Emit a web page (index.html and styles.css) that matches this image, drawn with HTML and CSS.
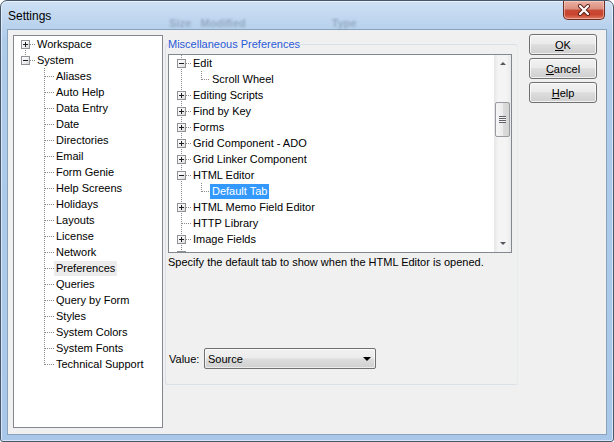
FILE: index.html
```html
<!DOCTYPE html>
<html>
<head>
<meta charset="utf-8">
<title>Settings</title>
<link rel="stylesheet" href="styles.css">
</head>
<body>
<div class="window">
  <div class="titlebar">
    <span class="title">Settings</span>
    <span class="ghost g1">Size&nbsp;&nbsp;&nbsp;Modified</span>
    <span class="ghost g2">Type</span>
    <button class="close" aria-label="Close">
      <svg width="14" height="12" viewBox="0 0 14 12">
        <path d="M3 2 L11 10 M11 2 L3 10" stroke="#5a2018" stroke-width="4" stroke-linecap="round" fill="none"/>
        <path d="M3 2 L11 10 M11 2 L3 10" stroke="#ffffff" stroke-width="2.2" stroke-linecap="round" fill="none"/>
      </svg>
    </button>
  </div>
  <div class="client">
    <div class="pane ltree">
      <div class="row"><span class="gut lroot-a"><span class="exp plus"></span></span><span class="lbl">Workspace</span></div>
      <div class="row"><span class="gut lroot-b"><span class="exp"></span></span><span class="lbl">System</span></div>
      <div class="row"><span class="gut lchild"></span><span class="lbl">Aliases</span></div>
      <div class="row"><span class="gut lchild"></span><span class="lbl">Auto Help</span></div>
      <div class="row"><span class="gut lchild"></span><span class="lbl">Data Entry</span></div>
      <div class="row"><span class="gut lchild"></span><span class="lbl">Date</span></div>
      <div class="row"><span class="gut lchild"></span><span class="lbl">Directories</span></div>
      <div class="row"><span class="gut lchild"></span><span class="lbl">Email</span></div>
      <div class="row"><span class="gut lchild"></span><span class="lbl">Form Genie</span></div>
      <div class="row"><span class="gut lchild"></span><span class="lbl">Help Screens</span></div>
      <div class="row"><span class="gut lchild"></span><span class="lbl">Holidays</span></div>
      <div class="row"><span class="gut lchild"></span><span class="lbl">Layouts</span></div>
      <div class="row"><span class="gut lchild"></span><span class="lbl">License</span></div>
      <div class="row"><span class="gut lchild"></span><span class="lbl">Network</span></div>
      <div class="row"><span class="gut lchild"></span><span class="lbl inactive-sel">Preferences</span></div>
      <div class="row"><span class="gut lchild"></span><span class="lbl">Queries</span></div>
      <div class="row"><span class="gut lchild"></span><span class="lbl">Query by Form</span></div>
      <div class="row"><span class="gut lchild"></span><span class="lbl">Styles</span></div>
      <div class="row"><span class="gut lchild"></span><span class="lbl">System Colors</span></div>
      <div class="row"><span class="gut lchild"></span><span class="lbl">System Fonts</span></div>
      <div class="row"><span class="gut lchild last"></span><span class="lbl">Technical Support</span></div>
    </div>

    <fieldset class="group">
      <legend>Miscellaneous Preferences</legend>
      <div class="list">
        <div class="rtree">
          <div class="row"><span class="gut rroot"><span class="exp"></span></span><span class="lbl">Edit</span></div>
          <div class="row"><span class="gut rchild"></span><span class="lbl">Scroll Wheel</span></div>
          <div class="row"><span class="gut rroot"><span class="exp plus"></span></span><span class="lbl">Editing Scripts</span></div>
          <div class="row"><span class="gut rroot"><span class="exp plus"></span></span><span class="lbl">Find by Key</span></div>
          <div class="row"><span class="gut rroot"><span class="exp plus"></span></span><span class="lbl">Forms</span></div>
          <div class="row"><span class="gut rroot"><span class="exp plus"></span></span><span class="lbl">Grid Component - ADO</span></div>
          <div class="row"><span class="gut rroot"><span class="exp plus"></span></span><span class="lbl">Grid Linker Component</span></div>
          <div class="row"><span class="gut rroot"><span class="exp"></span></span><span class="lbl">HTML Editor</span></div>
          <div class="row"><span class="gut rchild"></span><span class="lbl selected">Default Tab</span></div>
          <div class="row"><span class="gut rroot"><span class="exp plus"></span></span><span class="lbl">HTML Memo Field Editor</span></div>
          <div class="row"><span class="gut rleaf"></span><span class="lbl">HTTP Library</span></div>
          <div class="row"><span class="gut rroot"><span class="exp plus"></span></span><span class="lbl">Image Fields</span></div>
          <div class="row"><span class="gut rroot"><span class="exp plus"></span></span></div>
        </div>
        <div class="vscroll">
          <div class="sb-btn"><span class="tri-up"></span></div>
          <div class="track"><div class="thumb"><span class="grip"></span></div></div>
          <div class="sb-btn"><span class="tri-down"></span></div>
        </div>
      </div>
      <p class="desc">Specify the default tab to show when the HTML Editor is opened.</p>
      <div class="value-row">
        <span class="value-label">Value:</span>
        <div class="combo"><span>Source</span><span class="tri-down dark"></span></div>
      </div>
    </fieldset>

    <div class="buttons">
      <button class="btn"><u>O</u>K</button>
      <button class="btn"><u>C</u>ancel</button>
      <button class="btn"><u>H</u>elp</button>
    </div>
  </div>
</div>
</body>
</html>
```

FILE: styles.css
```css
:root {
  --vd: repeating-linear-gradient(to bottom, #8c8c8c 0 1px, transparent 1px 2px);
  --hd: repeating-linear-gradient(to right, #8c8c8c 0 1px, transparent 1px 2px);
}

html, body {
  margin: 0;
  padding: 0;
  background: #ffffff;
}

body {
  font-family: "Liberation Sans", Arial, sans-serif;
  font-size: 11px;
  color: #000;
}

.window {
  width: 614px;
  height: 442px;
  box-sizing: border-box;
  display: flex;
  flex-direction: column;
  border: 1px solid #48586c;
  border-radius: 7px 7px 3px 3px;
  background: linear-gradient(to bottom, #cfe1f4 0px, #bcd4ee 22px, #aecbea 40px, #a9c8e9 100%);
  box-shadow: inset 0 0 0 1px rgba(255, 255, 255, 0.55);
  overflow: hidden;
}

/* ---------- title bar ---------- */
.titlebar {
  height: 28px;
  flex: none;
  display: flex;
  align-items: flex-start;
  padding: 0 8px 0 7px;
}

.title {
  font-family: "Liberation Sans", Arial, sans-serif;
  font-size: 12px;
  line-height: 14px;
  margin-top: 8px;
  color: #000;
}

.ghost {
  align-self: flex-end;
  margin-bottom: 0;
  font-size: 11px;
  font-weight: bold;
  color: rgba(60, 78, 104, 0.32);
  filter: blur(1.2px);
  white-space: nowrap;
}

.g1 { margin-left: 118px; }
.g2 { margin-left: 86px; }

.close {
  margin-left: auto;
  width: 42px;
  height: 19px;
  padding: 0;
  border: 1px solid #6e2d24;
  border-top: none;
  border-radius: 0 0 5px 5px;
  background: linear-gradient(to bottom, #eab0a2 0%, #dc8f7e 45%, #c74a36 50%, #c9442f 75%, #e07a62 100%);
  box-shadow: inset 0 0 0 1px rgba(255, 220, 210, 0.5);
  display: flex;
  align-items: center;
  justify-content: center;
}

/* ---------- client ---------- */
.client {
  flex: 1;
  margin: 0 6px 6px 6px;
  border: 1px solid #8ba2bd;
  background: #f0f0f0;
  display: flex;
  align-items: flex-start;
  padding: 5px 9px 6px 5px;
}

.pane {
  width: 150px;
  height: 393px;
  box-sizing: border-box;
  border: 1px solid #828790;
  background: #fff;
  flex: none;
  overflow: hidden;
}

.row {
  display: flex;
  align-items: center;
  height: 16px;
  white-space: nowrap;
}

.gut {
  height: 16px;
  flex: none;
  display: flex;
  align-items: center;
  background-repeat: no-repeat;
}

.lbl {
  padding: 0 2px;
  line-height: 15px;
}

.inactive-sel { background: #ececec; }
.selected { background: #3399ff; color: #fff; }

.exp {
  width: 9px;
  height: 9px;
  box-sizing: border-box;
  border: 1px solid #8e9297;
  background-color: #fff;
  background-image:
    linear-gradient(#1e1e1e, #1e1e1e),
    linear-gradient(135deg, #ffffff 0%, #f2f2f2 50%, #d8d8d8 100%);
  background-size: 5px 1px, 100% 100%;
  background-position: center, 0 0;
  background-repeat: no-repeat;
}

.exp.plus {
  background-image:
    linear-gradient(#1e1e1e, #1e1e1e),
    linear-gradient(#1e1e1e, #1e1e1e),
    linear-gradient(135deg, #ffffff 0%, #f2f2f2 50%, #d8d8d8 100%);
  background-size: 5px 1px, 1px 5px, 100% 100%;
  background-position: center, center, 0 0;
}

/* left tree gutters */
.lroot-a, .lroot-b {
  width: 21px;
  background-image: var(--vd), var(--hd);
  background-size: 1px 8px, 5px 1px;
  background-position: 11px 8px, 16px 8px;
}
.lroot-b { background-position: 11px 0, 16px 8px; }
.lroot-a .exp, .lroot-b .exp { margin-left: 7px; }

.lchild {
  width: 40px;
  background-image: var(--vd), var(--hd);
  background-size: 1px 16px, 9px 1px;
  background-position: 30px 0, 31px 8px;
}
.lchild.last { background-size: 1px 9px, 9px 1px; }

/* group box */
.group {
  margin: 3px 0 0 2px;
  width: 353px;
  height: 347px;
  box-sizing: border-box;
  border: 1px solid #d9e1e6;
  border-right-color: #e6ebee;
  border-radius: 3px;
  padding: 3px 5px 0 2px;
  min-width: 0;
  flex: none;
}

.group legend {
  padding: 0;
  font-size: 11px;
  line-height: 13px;
  color: #2a5ad8;
}

.list {
  height: 199px;
  box-sizing: border-box;
  border: 1px solid #828790;
  background: #fff;
  display: flex;
}

.rtree {
  flex: 1;
  overflow: hidden;
}

.rroot {
  width: 22px;
  background-image: var(--vd), var(--hd);
  background-size: 1px 16px, 5px 1px;
  background-position: 12px 0, 17px 8px;
}
.rroot .exp { margin-left: 8px; }

.rleaf {
  width: 22px;
  background-image: var(--vd), var(--hd);
  background-size: 1px 16px, 9px 1px;
  background-position: 12px 0, 13px 8px;
}

.rchild {
  width: 41px;
  background-image: var(--vd), var(--vd), var(--hd);
  background-size: 1px 16px, 1px 9px, 8px 1px;
  background-position: 12px 0, 32px 0, 33px 8px;
}

/* scrollbar */
.vscroll {
  width: 17px;
  flex: none;
  display: flex;
  flex-direction: column;
  background: linear-gradient(to right, #e6e6e6 0%, #f4f4f4 25%, #f4f4f4 75%, #e9e9e9 100%);
}

.sb-btn {
  height: 17px;
  flex: none;
  display: flex;
  align-items: center;
  justify-content: center;
}

.tri-up {
  width: 0;
  height: 0;
  border-left: 3px solid transparent;
  border-right: 3px solid transparent;
  border-bottom: 3px solid #55595f;
}

.tri-down {
  width: 0;
  height: 0;
  border-left: 3px solid transparent;
  border-right: 3px solid transparent;
  border-top: 3px solid #55595f;
}

.track { flex: 1; }

.thumb {
  margin: 30px 1px 0 1px;
  height: 35px;
  box-sizing: border-box;
  border: 1px solid #979a9e;
  border-radius: 2px;
  background: linear-gradient(to right, #f6f6f6 0%, #ececec 50%, #dcdcdc 51%, #d4d4d4 100%);
  display: flex;
  align-items: center;
  justify-content: center;
}

.grip {
  width: 7px;
  height: 7px;
  background: repeating-linear-gradient(to bottom, #5f6368 0 1px, #f4f4f4 1px 2px);
}

.desc {
  margin: 3px 0 0 0;
  line-height: 13px;
  white-space: nowrap;
}

.value-row {
  margin-top: 79px;
  display: flex;
  align-items: center;
  padding-left: 1px;
}

.value-label { width: 35px; }

.combo {
  width: 172px;
  height: 21px;
  box-sizing: border-box;
  border: 1px solid #707070;
  border-radius: 2px;
  background: linear-gradient(to bottom, #f2f2f2 0%, #ebebeb 48%, #dddddd 52%, #cfcfcf 100%);
  box-shadow: inset 0 0 0 1px rgba(255, 255, 255, 0.6);
  display: flex;
  align-items: center;
  justify-content: space-between;
  padding: 0 4px 0 3px;
}

.tri-down.dark {
  border-left: 4px solid transparent;
  border-right: 4px solid transparent;
  border-top: 4px solid #000;
}

/* buttons */
.buttons {
  margin-left: 11px;
  margin-top: -1px;
  display: flex;
  flex-direction: column;
  gap: 3px;
  flex: none;
}

.btn {
  width: 68px;
  height: 21px;
  padding: 0;
  font-family: "Liberation Sans", Arial, sans-serif;
  font-size: 11px;
  color: #000;
  border: 1px solid #707070;
  border-radius: 3px;
  background: linear-gradient(to bottom, #f2f2f2 0%, #ebebeb 45%, #dddddd 52%, #cfcfcf 100%);
  box-shadow: inset 0 0 0 1px rgba(255, 255, 255, 0.7);
}
```
